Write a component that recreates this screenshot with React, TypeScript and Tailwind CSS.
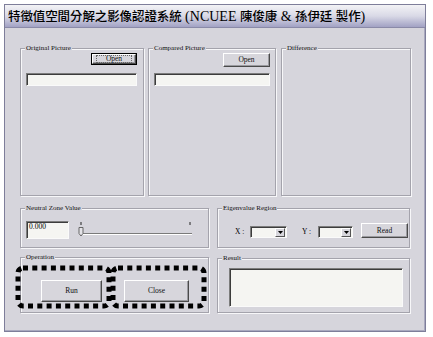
import React from 'react';

const serif = "font-['Liberation_Serif','Noto_Sans_CJK_TC',serif]";
const cjk = "font-['Noto_Sans_CJK_TC',sans-serif] font-medium text-[12.5px] tracking-[-0.1px]";
const groupBox = 'relative border border-[#a4a3ac] shadow-[inset_1px_1px_0_#f7f7f9,1px_1px_0_#f7f7f9]';
const raised =
  'flex items-center justify-center bg-[#d7d6dc] border border-t-white border-l-white border-r-[#4a4a4a] border-b-[#4a4a4a] shadow-[inset_-1px_-1px_0_#9a9a9f] text-[7.5px] leading-none text-[#111]';
const sunken =
  'bg-[#f5f5f2] border border-t-[#7c7c7c] border-l-[#7c7c7c] border-r-[#fafafa] border-b-[#fafafa] shadow-[inset_1px_1px_0_#3c3c3c]';

function Group({ label, className, children }: { label: string; className: string; children?: React.ReactNode }) {
  return (
    <div className={`${groupBox} ${className}`}>
      <span className="absolute -top-[5px] left-[4px] bg-[#d6d5dc] px-[1px] text-[7px] leading-[9px] text-[#111]">{label}</span>
      {children}
    </div>
  );
}

function Combo({ w }: { w: string }) {
  return (
    <div className={`${sunken} ${w} h-[12px] flex justify-end items-center pr-[1px]`}>
      <div className="w-[10px] h-[9px] bg-[#d7d6dc] border border-t-white border-l-white border-r-[#555] border-b-[#555] flex items-center justify-center">
        <svg width="5" height="3" viewBox="0 0 5 3">
          <path d="M0 0h5L2.5 3z" fill="#000" />
        </svg>
      </div>
    </div>
  );
}

export default function App() {
  return (
    <div className={`w-[433px] h-[337px] bg-white pt-[4px] pl-[4px] ${serif}`}>
      <div className="w-[422px] h-[328px] border border-[#7e7e9a] bg-[#d6d5dc] flex flex-col shadow-[inset_-1px_-1px_0_#a9a9bf]">
        {/* title bar */}
        <div className="h-[23px] shrink-0 bg-gradient-to-b from-[#f3f3f6] via-[#d9d9e6] to-[#a2a2c4] border-b border-[#8a8aa8] flex items-center pl-[3px] text-black">
          <span className={cjk}>特徵值空間分解之影像認證系統</span>
          <span className="text-[14px] whitespace-pre"> (NCUEE </span>
          <span className={cjk}>陳俊康</span>
          <span className="text-[14px] whitespace-pre"> &amp; </span>
          <span className={cjk}>孫伊廷</span>
          <span className="text-[14px] whitespace-pre"> </span>
          <span className={cjk}>製作</span>
          <span className="text-[14px]">)</span>
        </div>

        {/* body */}
        <div className="flex-1 pl-[15px] pt-[20px] flex flex-col">
          <div className="flex h-[148px]">
            <Group label="Original Picture" className="w-[124px] h-full flex flex-col pt-[4px] pl-[5px] pr-[6px]">
              <div className="ml-auto w-[46px] h-[12px] border border-black">
                <div className={`${raised} relative w-full h-full`}>
                  <span className="absolute inset-y-0 inset-x-[3px] border border-dotted border-[#666]" />
                  Open
                </div>
              </div>
              <div className={`${sunken} mt-[8px] h-[13px] w-full`} />
            </Group>
            <Group label="Compared Picture" className="ml-[4px] w-[128px] h-full flex flex-col pt-[4px] pl-[5px] pr-[5px]">
              <div className={`${raised} ml-auto w-[47px] h-[14px]`}>Open</div>
              <div className={`${sunken} mt-[6px] h-[13px] w-full`} />
            </Group>
            <Group label="Difference" className="ml-[5px] w-[130px] h-full" />
          </div>

          <div className="flex h-[40px] mt-[12px]">
            <Group label="Neutral Zone Value" className="w-[189px] h-full flex items-start pt-[12px] pl-[5px]">
              <div className={`${sunken} w-[43px] h-[18px] text-[7.5px] leading-[10px] pl-[2px] text-black`}>0.000</div>
              <div className="relative ml-[9px] w-[117px] h-[18px]">
                <svg width="117" height="18" viewBox="0 0 117 18" className="absolute inset-0">
                  <line x1="2" y1="12.5" x2="114" y2="12.5" stroke="#7a7a7a" />
                  <line x1="2" y1="13.5" x2="114" y2="13.5" stroke="#ffffff" />
                  <line x1="3" y1="1" x2="3" y2="4" stroke="#222" />
                  <line x1="112" y1="1" x2="112" y2="4" stroke="#222" />
                  <path d="M1 6.5h4v6l-2 2.5l-2-2.5z" fill="#e4e3e8" stroke="#666" />
                </svg>
              </div>
            </Group>
            <Group label="Eigenvalue Region" className="ml-[8px] w-[193px] h-full flex items-start pt-[14px] pl-[17px] text-[7.5px] text-black">
              <span className="mt-[3px] w-[15px]">X :</span>
              <div className="mt-[3px]">
                <Combo w="w-[37px]" />
              </div>
              <span className="mt-[3px] ml-[15px] w-[16px]">Y :</span>
              <div className="mt-[3px]">
                <Combo w="w-[35px]" />
              </div>
              <div className={`${raised} ml-[8px] w-[47px] h-[15px]`}>Read</div>
            </Group>
          </div>

          <div className="flex h-[56px] mt-[9px]">
            <Group label="Operation" className="w-[189px] h-full flex items-start pt-[22px] pl-[20px]">
              <div className={`${raised} w-[61px] h-[22px]`}>Run</div>
              <div className={`${raised} ml-[22px] w-[65px] h-[22px]`}>Close</div>
              <svg className="absolute left-[-8px] top-0" width="200" height="56" viewBox="0 0 200 56">
                <rect x="5" y="10" width="91" height="38" rx="5" fill="none" stroke="#000" strokeWidth="5" strokeDasharray="5 4.3" />
                <rect x="100" y="10" width="91" height="38" rx="5" fill="none" stroke="#000" strokeWidth="5" strokeDasharray="5 4.3" />
              </svg>
            </Group>
            <Group label="Result" className="ml-[8px] mt-[1px] w-[193px] h-[55px] pt-[9px] pl-[11px]">
              <div className={`${sunken} w-[174px] h-[39px]`} />
            </Group>
          </div>
        </div>
      </div>
    </div>
  );
}
